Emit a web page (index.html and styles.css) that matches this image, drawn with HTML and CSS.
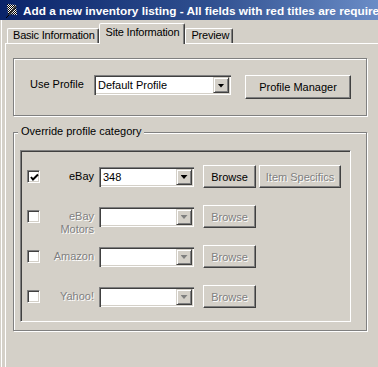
FILE: index.html
```html
<!DOCTYPE html>
<html lang="en">
<head>
    <meta charset="UTF-8">
    <title>Add a new inventory listing</title>
    <link rel="stylesheet" href="styles.css">
</head>
<body>
    <div class="window">
        <div class="titlebar">
            <svg class="app-icon" width="13" height="14" viewBox="0 0 13 14">
                <defs>
                    <pattern id="chk" width="2" height="2" patternUnits="userSpaceOnUse">
                        <rect width="1" height="1" fill="#000"/>
                        <rect x="1" y="1" width="1" height="1" fill="#000"/>
                        <rect x="1" width="1" height="1" fill="#fff"/>
                        <rect y="1" width="1" height="1" fill="#fff"/>
                    </pattern>
                </defs>
                <path d="M2 0 L11 1 L12 11 L3 10 Z" fill="url(#chk)"/>
                <path d="M11 2 L4 11" stroke="#333" stroke-width="2"/>
                <path d="M4 11 L2 13 L1 14" stroke="#000" stroke-width="1"/>
            </svg>
            <span class="title">Add a new inventory listing - All fields with red titles are required</span>
        </div>

        <div class="client">
            <div class="tabs">
                <div class="tab">Basic Information</div>
                <div class="tab active">Site Information</div>
                <div class="tab">Preview</div>
            </div>

            <div class="tab-panel">
                <div class="group profile-group">
                    <span class="field-label">Use Profile</span>
                    <div class="combo profile-combo">
                        <span class="combo-text">Default Profile</span>
                        <span class="combo-btn"><i class="arrow"></i></span>
                    </div>
                    <button class="btn manager-btn">Profile Manager</button>
                </div>

                <div class="group override-group">
                    <div class="caption">Override profile category</div>
                    <div class="sunken">
                        <div class="site-row">
                            <span class="checkbox checked">
                                <svg width="9" height="9" viewBox="0 0 9 9"><path d="M1 4 L3 6.5 L8 1.5" fill="none" stroke="#000" stroke-width="2"/></svg>
                            </span>
                            <span class="site-label">eBay</span>
                            <div class="combo site-combo">
                                <span class="combo-text">348</span>
                                <span class="combo-btn"><i class="arrow"></i></span>
                            </div>
                            <button class="btn browse-btn">Browse</button>
                            <button class="btn specifics-btn disabled">Item Specifics</button>
                        </div>

                        <div class="site-row">
                            <span class="checkbox"></span>
                            <span class="site-label disabled two-line">eBay<br>Motors</span>
                            <div class="combo site-combo disabled">
                                <span class="combo-text"></span>
                                <span class="combo-btn"><i class="arrow"></i></span>
                            </div>
                            <button class="btn browse-btn disabled">Browse</button>
                        </div>

                        <div class="site-row">
                            <span class="checkbox"></span>
                            <span class="site-label disabled">Amazon</span>
                            <div class="combo site-combo disabled">
                                <span class="combo-text"></span>
                                <span class="combo-btn"><i class="arrow"></i></span>
                            </div>
                            <button class="btn browse-btn disabled">Browse</button>
                        </div>

                        <div class="site-row">
                            <span class="checkbox"></span>
                            <span class="site-label disabled">Yahoo!</span>
                            <div class="combo site-combo disabled">
                                <span class="combo-text"></span>
                                <span class="combo-btn"><i class="arrow"></i></span>
                            </div>
                            <button class="btn browse-btn disabled">Browse</button>
                        </div>
                    </div>
                </div>
            </div>
        </div>
    </div>
</body>
</html>
```

FILE: styles.css
```css
* {
    box-sizing: border-box;
}

body {
    margin: 0;
    background-color: #d4d0c8;
    font-family: 'Liberation Sans', Arial, sans-serif;
    font-size: 11px;
    color: #000;
}

.window {
    width: 378px;
    height: 367px;
    overflow: hidden;
}

/* title bar */
.titlebar {
    display: flex;
    align-items: flex-start;
    height: 20px;
    padding-left: 5px;
    background: linear-gradient(to right, #0a246a 0%, #2f4f8f 55%, #6a8cc6 100%);
    white-space: nowrap;
    overflow: hidden;
}

.app-icon {
    flex: none;
    margin-top: 4px;
    margin-right: 5px;
}

.title {
    padding-top: 3px;
    line-height: 17px;
    font-size: 11.8px;
    font-weight: bold;
    color: #fff;
}

/* client area */
.client {
    margin-left: 1px;
    border-left: 1px solid #fff;
    padding-left: 3px;
    height: 347px;
}

.tabs {
    display: flex;
    align-items: flex-end;
    height: 23px;
    padding-left: 2px;
}

.tab {
    height: 15px;
    padding: 0 3px 0 5px;
    line-height: 13px;
    letter-spacing: -0.2px;
    border: 1px solid;
    border-bottom: 0;
    border-color: #fff #404040 transparent #fff;
    box-shadow: inset -1px 0 #808080;
    border-radius: 2px 2px 0 0;
    white-space: nowrap;
}

.tab.active {
    height: 21px;
    margin-bottom: -1px;
    padding: 0 5px 0 6px;
    line-height: 17px;
    background-color: #d4d0c8;
    position: relative;
    z-index: 1;
}

.tab-panel {
    border-top: 1px solid #fff;
    border-left: 1px solid #fff;
    padding-left: 7px;
    height: 324px;
}

/* group boxes */
.group {
    width: 354px;
    border: 1px solid #808080;
    box-shadow: inset 1px 1px #fff, 1px 1px #fff;
}

.profile-group {
    display: flex;
    align-items: flex-start;
    height: 58px;
    margin-top: 14px;
    padding: 16px 0 0 16px;
}

.field-label {
    width: 64px;
    line-height: 18px;
}

.override-group {
    display: flex;
    flex-direction: column;
    margin-top: 16px;
}

.caption {
    align-self: flex-start;
    margin: -8px 0 0 4px;
    padding: 0 3px;
    line-height: 13px;
    background-color: #d4d0c8;
}

.sunken {
    width: 331px;
    margin: 12px 0 8px 6px;
    padding: 14px 0 13px 6px;
    border: 1px solid;
    border-color: #808080 #fff #fff #808080;
    box-shadow: inset 1px 1px #404040, inset -1px -1px #d4d0c8;
    display: flex;
    flex-direction: column;
    gap: 17px;
}

/* controls */
.combo {
    display: flex;
    height: 20px;
    padding: 2px;
    background-color: #fff;
    border: 0;
    box-shadow: inset 1px 1px #808080, inset 2px 2px #404040, inset -1px -1px #fff, inset -2px -2px #d4d0c8;
}

.combo-text {
    flex: 1;
    padding-left: 2px;
    line-height: 16px;
    overflow: hidden;
}

.combo-btn {
    width: 16px;
    height: 16px;
    display: flex;
    align-items: center;
    justify-content: center;
    background-color: #d4d0c8;
    border: 1px solid;
    border-color: #d4d0c8 #404040 #404040 #d4d0c8;
    box-shadow: inset 1px 1px #fff, inset -1px -1px #808080;
}

.arrow {
    display: block;
    width: 7px;
    height: 4px;
    margin-top: 1px;
    background-color: #000;
    clip-path: polygon(0 0, 100% 0, 50% 100%);
}

.combo.disabled .arrow {
    background-color: #808080;
}

.profile-combo {
    width: 137px;
}

.btn {
    height: 23px;
    padding: 0;
    font-family: inherit;
    font-size: 11px;
    color: #000;
    background-color: #d4d0c8;
    border: 1px solid;
    border-color: #fff #404040 #404040 #fff;
    box-shadow: inset -1px -1px #808080;
}

.btn.disabled,
.site-label.disabled {
    color: #808080;
    text-shadow: 1px 1px 0 #fff;
}

.manager-btn {
    width: 106px;
    height: 24px;
    margin-left: 14px;
}

.site-row {
    display: flex;
    align-items: center;
    height: 23px;
}

.checkbox {
    width: 13px;
    height: 13px;
    display: flex;
    align-items: center;
    justify-content: center;
    background-color: #fff;
    border: 1px solid;
    border-color: #808080 #fff #fff #808080;
    box-shadow: inset 1px 1px #404040, inset -1px -1px #d4d0c8;
}

.checkbox svg {
    margin: 1px 0 0 1px;
}

.site-label {
    width: 54px;
    text-align: right;
    line-height: 13px;
}

.site-label.two-line {
    align-self: flex-start;
    margin-top: 5px;
}

.site-combo {
    width: 95px;
    margin-left: 5px;
}

.browse-btn {
    width: 53px;
    margin-left: 9px;
}

.specifics-btn {
    width: 82px;
    margin-left: 3px;
}
```
